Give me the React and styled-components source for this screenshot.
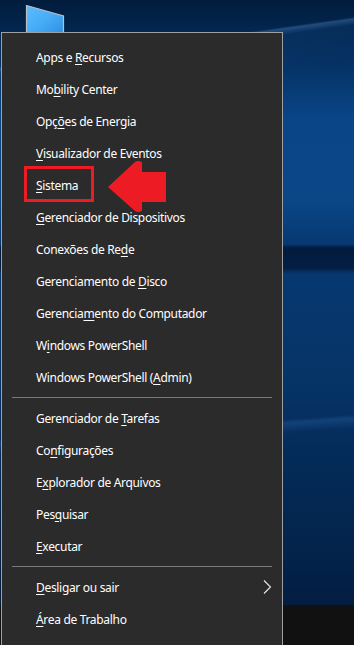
import React from "react";
import styled, { createGlobalStyle } from "styled-components";

const Global = createGlobalStyle`
  html, body { margin: 0; padding: 0; background: #000; }
  body { font-family: "Noto Sans", "Open Sans", sans-serif; }
`;

const Desktop = styled.div`
  position: relative;
  width: 354px;
  height: 645px;
  overflow: hidden;
  display: flex;
  flex-direction: column;
`;

const Wallpaper = styled.div`
  flex: 1;
  background:
    linear-gradient(172deg, transparent 0 66px, rgba(90,150,220,0.35) 68px, rgba(40,100,180,0.12) 74px, transparent 110px),
    linear-gradient(180deg, transparent 0 244px, rgba(0,10,30,0.65) 248px, rgba(0,10,30,0.55) 268px, transparent 274px),
    linear-gradient(176deg, transparent 0 438px, rgba(60,120,200,0.25) 442px, transparent 452px),
    linear-gradient(180deg, #011c3c 0px, #032a55 40px, #0a4588 120px, #0b4687 200px, #073a74 240px, #06386f 280px, #063467 380px, #042b58 460px, #03234a 560px, #021d40 605px);
`;

const Taskbar = styled.div`
  height: 40px;
  background: #111112;
  display: flex;
  align-items: flex-end;
  padding-left: 55px;
  gap: 9px;
`;

const TaskIndicator = styled.div`
  width: 40px;
  height: 2px;
  background: #76b9ed;
`;

const DesktopIcon = styled.svg`
  position: absolute;
  left: 25px;
  top: 4px;
`;

const Menu = styled.div`
  position: absolute;
  left: 1px;
  top: 32px;
  width: 280px;
  height: 610px;
  background: #2b2b2b;
  border: 1px solid #a0a0a0;
  padding: 8px 0 0;
  box-sizing: content-box;
  display: flex;
  flex-direction: column;
`;

const Item = styled.div`
  position: relative;
  height: 32px;
  display: flex;
  align-items: center;
  padding-left: 34px;
  padding-right: 10px;
  color: #ffffff;
  font-size: 12px;
  letter-spacing: -0.32px;
  white-space: nowrap;
  ${(p) =>
    p.$highlight &&
    `
    &::after {
      content: "";
      position: absolute;
      left: 22px;
      top: -3px;
      width: 64px;
      height: 30px;
      border: 3px solid #ed1c24;
    }
  `}
`;

const Label = styled.span`
  flex: 1;
`;

const Key = styled.span`
  text-decoration: underline;
  text-underline-offset: 2px;
  text-decoration-thickness: 1px;
`;

const Separator = styled.div`
  height: 9px;
  display: flex;
  align-items: center;
  padding: 0 10px;
  &::before {
    content: "";
    flex: 1;
    height: 1px;
    background: #7a7a7a;
  }
`;

const Chevron = styled.svg`
  flex: none;
`;

const Arrow = styled.svg`
  position: absolute;
  left: 106px;
  top: 159px;
`;

const groups = [
  [
    ["Apps e ", "R", "ecursos"],
    ["Mo", "b", "ility Center"],
    ["Opç", "õ", "es de Energia"],
    ["", "V", "isualizador de Eventos"],
    ["", "S", "istema", true],
    ["", "G", "erenciador de Dispositivos"],
    ["Conexões de Re", "d", "e"],
    ["Gerenciamento de ", "D", "isco"],
    ["Gerencia", "m", "ento do Computador"],
    ["W", "i", "ndows PowerShell"],
    ["Windows PowerShell (", "A", "dmin)"],
  ],
  [
    ["Gerenciador de ", "T", "arefas"],
    ["Co", "n", "figurações"],
    ["E", "x", "plorador de Arquivos"],
    ["Pes", "q", "uisar"],
    ["", "E", "xecutar"],
  ],
  [
    ["", "D", "esligar ou sair", false, true],
    ["", "Á", "rea de Trabalho"],
  ],
];

export default function App() {
  return (
    <>
      <Global />
      <Desktop>
        <Wallpaper />
        <Taskbar>
          <TaskIndicator />
          <TaskIndicator />
          <TaskIndicator />
          <TaskIndicator />
        </Taskbar>
        <DesktopIcon width="40" height="30" viewBox="0 0 40 30">
          <defs>
            <linearGradient id="scr" x1="0" y1="0" x2="1" y2="1">
              <stop offset="0" stopColor="#5cbcff" />
              <stop offset="0.5" stopColor="#47adf8" />
              <stop offset="1" stopColor="#2f8fe0" />
            </linearGradient>
          </defs>
          <path d="M1.5 1.5 L38.5 12 L38.5 30 L1.5 30 Z" fill="url(#scr)" stroke="#b8c0c8" strokeWidth="1.2" />
        </DesktopIcon>
        <Menu>
          {groups.map((g, gi) => (
            <React.Fragment key={gi}>
              {gi > 0 && <Separator />}
              {g.map(([a, k, b, hl, sub]) => (
                <Item key={a + k + b} $highlight={hl}>
                  <Label>
                    {a}
                    <Key>{k}</Key>
                    {b}
                  </Label>
                  {sub && (
                    <Chevron width="9" height="14" viewBox="0 0 9 14">
                      <path d="M1 0.5 L7.5 7 L1 13.5" fill="none" stroke="#e8e8e8" strokeWidth="1.1" />
                    </Chevron>
                  )}
                </Item>
              ))}
            </React.Fragment>
          ))}
        </Menu>
        <Arrow width="62" height="56" viewBox="0 0 62 56">
          <path
            d="M2 28 L29 3 Q31 1.5 33 2 L36 3 L36 13 L60 13 L60 43 L36 43 L36 52 L33 53 Q31 53.5 29 52 Z"
            fill="#ed1c24"
          />
        </Arrow>
      </Desktop>
    </>
  );
}
